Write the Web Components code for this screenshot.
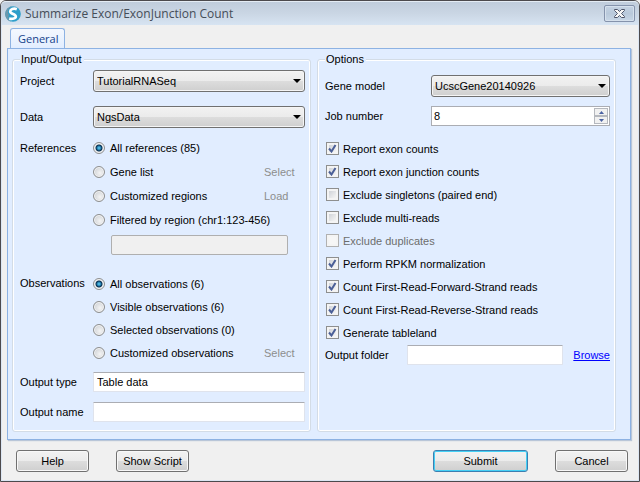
<!DOCTYPE html>
<html lang="en">
<head>
<meta charset="utf-8">
<title>Summarize Exon/ExonJunction Count</title>
<style>
body { margin: 0; font: 11px/14px "Liberation Sans", Arial, sans-serif; color: #000; background: #f0f0f0; }
</style>
</head>
<body>
<dialog-window heading="Summarize Exon/ExonJunction Count">
  <tab-panel label="General">
    <group-box label="Input/Output">
      <select-field label="Project" value="TutorialRNASeq" style="margin-top:4px"></select-field>
      <select-field label="Data" value="NgsData" style="margin-top:14px"></select-field>
      <radio-set label="References" style="margin-top:8px; --pitch:24px">
        <radio-item checked>All references (85)</radio-item>
        <radio-item action="Select">Gene list</radio-item>
        <radio-item action="Load">Customized regions</radio-item>
        <radio-item>Filtered by region (chr1:123-456)</radio-item>
        <region-field></region-field>
      </radio-set>
      <radio-set label="Observations" style="margin-top:17px; --pitch:23px">
        <radio-item checked>All observations (6)</radio-item>
        <radio-item>Visible observations (6)</radio-item>
        <radio-item>Selected observations (0)</radio-item>
        <radio-item action="Select">Customized observations</radio-item>
      </radio-set>
      <text-field label="Output type" value="Table data" style="margin-top:8px"></text-field>
      <text-field label="Output name" value="" style="margin-top:10px"></text-field>
    </group-box>
    <group-box label="Options" style="--label-width:106px">
      <select-field label="Gene model" value="UcscGene20140926" style="margin-top:9px"></select-field>
      <number-field label="Job number" value="8" style="margin-top:9px"></number-field>
      <check-list>
        <check-item checked>Report exon counts</check-item>
        <check-item checked>Report exon junction counts</check-item>
        <check-item>Exclude singletons (paired end)</check-item>
        <check-item>Exclude multi-reads</check-item>
        <check-item disabled>Exclude duplicates</check-item>
        <check-item checked>Perform RPKM normalization</check-item>
        <check-item checked>Count First-Read-Forward-Strand reads</check-item>
        <check-item checked>Count First-Read-Reverse-Strand reads</check-item>
        <check-item checked>Generate tableland</check-item>
      </check-list>
      <text-field label="Output folder" value="" link="Browse" style="--label-width:82px"></text-field>
    </group-box>
  </tab-panel>
  <push-button slot="left">Help</push-button>
  <push-button slot="left">Show Script</push-button>
  <push-button slot="right" primary style="--width:95px">Submit</push-button>
  <push-button slot="right">Cancel</push-button>
</dialog-window>
<script>
class Base extends HTMLElement {
  connectedCallback() {
    if (this.shadowRoot) return;
    this.attachShadow({ mode: "open" }).innerHTML =
      `<style>*{box-sizing:border-box}:host{display:block;box-sizing:border-box}button,input,select{font:inherit;color:inherit;margin:0}${this.css()}</style>${this.html()}`;
    this.ready();
  }
  attr(name) { return this.getAttribute(name) || ""; }
  ready() {}
}

customElements.define("dialog-window", class extends Base {
  css() { return `
    :host{display:flex;flex-direction:column;min-height:100vh;border:1px solid #4c4a4d;border-radius:6px 6px 0 0;box-shadow:inset 0 0 0 1px #dce6f3;background:#f0f0f0}
    header{display:flex;align-items:center;gap:4px;height:24px;padding:0 4px;border-radius:5px 5px 0 0;background:linear-gradient(#c0cddc,#cad6e4 50%,#d7e4f2);border-top:1px solid #e4ecf4}
    h1{flex:1;margin:0;font:12px/16px "Open Sans","Noto Sans",sans-serif;color:#454d58}
    .logo{width:16px;height:16px}
    .close{width:31px;height:17px;padding:0;border:1px solid #8593ac;border-radius:2px;background:linear-gradient(#c5d3e3,#b9c9db 50%,#c8d7e7);box-shadow:inset 0 0 0 1px #d6e1ed;display:grid;place-items:center}
    main{flex:1;padding:3px 8px 0 6px;display:flex;flex-direction:column}
    footer{display:flex;justify-content:space-between;padding:10px 11px 9px 15px}
    footer div{display:flex;gap:27px}`; }
  html() { return `
    <header>
      <svg class="logo" viewBox="0 0 16 16" aria-hidden="true"><circle cx="8" cy="8" r="7.8" fill="#2e9fca"/><path d="M8 .2A7.8 7.8 0 0 0 .2 8C.3 12 3 15 6 15.6 3 13 3 11 4 9 1.5 5 4 1.5 8 .2Z" fill="#6b98ad"/><path d="M11.8 3.2C8.5 2 5.2 3.3 5.2 5.4 5.2 8.1 10.8 8 10.8 10.5 10.8 12.6 7.5 13.2 4.2 12.6" fill="none" stroke="#fff" stroke-width="2.7"/></svg>
      <h1>${this.attr("heading")}</h1>
      <button class="close" aria-label="Close"><svg width="13" height="11" viewBox="0 0 13 11"><path d="M1.5 1.5h3l2 2 2-2h3v1l-3 3 3 3v1h-3l-2-2-2 2h-3v-1l3-3-3-3z" fill="#f7f7f7" stroke="#4f566b"/></svg></button>
    </header>
    <main><slot></slot></main>
    <footer><div><slot name="left"></slot></div><div><slot name="right"></slot></div></footer>`; }
});

customElements.define("tab-panel", class extends Base {
  css() { return `
    :host{display:flex;flex:1;flex-direction:column}
    [role=tablist]{padding-left:3px;display:flex}
    [role=tab]{height:21px;padding:0 6px 0 7px;margin-bottom:-1px;border:1px solid #8db2e3;border-bottom:0;border-radius:3px 3px 0 0;background:linear-gradient(#f4f8fe,#e1edff);font:11px/18px "Open Sans","Noto Sans",sans-serif;color:#15428b}
    [role=tabpanel]{flex:1;display:grid;grid-template-columns:1fr 1fr;gap:6px;padding:4px 14px 7px 4px;border:1px solid #8db2e3;background:#e1edff;box-shadow:1px 1px 1px #b9c6d8}`; }
  html() { return `<div role="tablist"><button role="tab" aria-selected="true">${this.attr("label")}</button></div><div role="tabpanel"><slot></slot></div>`; }
});

customElements.define("group-box", class extends Base {
  css() { return `
    :host{display:grid;min-width:0}
    fieldset{min-width:0;margin:0;padding:0 5px 8px 7px;border:1px solid #d3dce6;border-radius:3px;box-shadow:inset 0 0 0 1px #fff}
    legend{padding:0 2px 0 1px;margin:0;background:#e1edff;line-height:13px}`; }
  html() { return `<fieldset><legend>${this.attr("label")}</legend><slot></slot></fieldset>`; }
});

const rowCss = `
  .row{display:grid;grid-template-columns:var(--label-width,73px) minmax(0,1fr);align-items:center}
  input{width:100%;min-width:0;height:20px;padding:0 3px;border:1px solid #dfe3ec;border-top-color:#abadb3;background:#fff;border-radius:1px}`;

customElements.define("select-field", class extends Base {
  css() { return rowCss + `
    .pick{display:grid;align-items:center}
    select{grid-area:1/1;appearance:none;width:100%;height:22px;padding:0 20px 0 3px;border:1px solid #707070;border-radius:3px;background:linear-gradient(#f2f2f2,#ebebeb 50%,#ddd 50%,#cfcfcf);box-shadow:inset 0 0 0 1px #f5f5f5}
    svg{grid-area:1/1;justify-self:end;margin-right:4px;pointer-events:none}`; }
  html() { return `<div class="row"><label for="c">${this.attr("label")}</label><div class="pick"><select id="c"><option>${this.attr("value")}</option></select><svg width="8" height="4" viewBox="0 0 8 4"><path d="M0 0h8L4 4z"/></svg></div></div>`; }
});

customElements.define("text-field", class extends Base {
  css() { return rowCss + `.control{display:flex;align-items:center;gap:10px}a{color:#00f}`; }
  html() { return `<div class="row"><label for="c">${this.attr("label")}</label><div class="control"><input id="c" type="text" value="${this.attr("value")}">${this.attr("link") ? `<a href="#">${this.attr("link")}</a>` : ""}</div></div>`; }
});

customElements.define("region-field", class extends Base {
  css() { return `:host{padding:3px 17px 0 18px}input{display:block;width:100%;height:20px;border:1px solid #afafaf;border-radius:2px;background:#f0f0f0}`; }
  html() { return `<input type="text" aria-label="Region" disabled>`; }
});

customElements.define("number-field", class extends Base {
  css() { return rowCss + `
    .spin{display:flex;height:20px;padding:1px;border:1px solid #abadb3;background:#fff}
    input{height:16px;border:0;padding:0 1px;appearance:textfield}
    input::-webkit-inner-spin-button{display:none}
    .steps{display:grid;grid-template-rows:8px 8px}
    .steps button{width:14px;padding:0;border:1px solid #b5b8be;background:#f1f1f1;display:grid;place-items:center}`; }
  html() { return `<div class="row"><label for="c">${this.attr("label")}</label><div class="spin"><input id="c" type="number" value="${this.attr("value")}"><div class="steps"><button aria-label="Increase"><svg width="5" height="3"><path d="M0 3h5L2.5 0z" fill="#4a62a3"/></svg></button><button aria-label="Decrease"><svg width="5" height="3"><path d="M0 0h5L2.5 3z" fill="#4a62a3"/></svg></button></div></div></div>`; }
  ready() {
    const input = this.shadowRoot.querySelector("input");
    const [up, down] = this.shadowRoot.querySelectorAll("button");
    up.onclick = () => input.stepUp();
    down.onclick = () => input.stepDown();
  }
});

customElements.define("radio-set", class extends Base {
  css() { return `.set{display:grid;grid-template-columns:var(--label-width,73px) minmax(0,1fr)}.name{line-height:var(--pitch)}`; }
  html() { return `<div class="set" role="radiogroup" aria-labelledby="n"><span class="name" id="n">${this.attr("label")}</span><div><slot></slot></div></div>`; }
  ready() {
    this.addEventListener("pick", e => this.querySelectorAll("radio-item").forEach(item => {
      if (item !== e.target) item.shadowRoot.querySelector("input").checked = false;
    }));
  }
});

customElements.define("radio-item", class extends Base {
  css() { return `
    :host{display:flex;align-items:center;justify-content:space-between;height:var(--pitch)}
    label{display:flex;align-items:center;gap:5px}
    input{appearance:none;width:12px;height:12px;border:1px solid #8e8f8f;border-radius:50%;background:radial-gradient(circle at 60% 60%,#f4f4f4,#c5c9ce);box-shadow:inset 0 0 0 1px #f4f4f4}
    input:checked{background:radial-gradient(circle at 50% 50%,#4bb4de 0 1px,#1b6e9e 2px,#0b2f4e 3px,#e4e8ec 4px)}
    button{width:41px;padding:0;border:0;background:none;text-align:left;color:#8d8d8d}`; }
  html() { return `<label><input type="radio" ${this.hasAttribute("checked") ? "checked" : ""}><span><slot></slot></span></label>${this.attr("action") ? `<button disabled>${this.attr("action")}</button>` : ""}`; }
  ready() {
    this.shadowRoot.querySelector("input").onchange = () => this.dispatchEvent(new CustomEvent("pick", { bubbles: true }));
  }
});

customElements.define("check-list", class extends Base {
  css() { return `:host{padding:11px 0 1px 1px}`; }
  html() { return `<slot></slot>`; }
});

customElements.define("check-item", class extends Base {
  css() { return `
    :host{height:23px}
    label{display:flex;align-items:center;gap:4px;height:23px}
    :host([disabled]) label{color:#6d6d6d}
    .box{display:grid;place-items:center}
    input{grid-area:1/1;appearance:none;width:13px;height:13px;border:1px solid #8e8f8f;background:linear-gradient(135deg,#c6cad1,#f4f4f4 80%);box-shadow:inset 0 0 0 2px #f4f4f4}
    input:disabled{border-color:#b1b1b1;background:#f6f6f6}
    svg{grid-area:1/1;pointer-events:none;visibility:hidden}
    input:checked+svg{visibility:visible}`; }
  html() { return `<label><span class="box"><input type="checkbox" ${this.hasAttribute("checked") ? "checked" : ""} ${this.hasAttribute("disabled") ? "disabled" : ""}><svg width="9" height="9" viewBox="0 0 9 9"><path d="M1 4.5 3.5 7.5 7.5 1" fill="none" stroke="#4b5f97" stroke-width="2"/></svg></span><span><slot></slot></span></label>`; }
});

customElements.define("push-button", class extends Base {
  css() { return `
    button{display:block;min-width:var(--width,73px);height:22px;padding:0 6px;border:1px solid #707070;border-radius:3px;background:linear-gradient(#f2f2f2,#ebebeb 50%,#ddd 50%,#cfcfcf);box-shadow:inset 0 0 0 1px #f8f8f8}
    :host([primary]) button{border-color:#3c7fb1;box-shadow:inset 0 0 0 1px #45d0f5}`; }
  html() { return `<button><slot></slot></button>`; }
});
</script>
</body>
</html>
